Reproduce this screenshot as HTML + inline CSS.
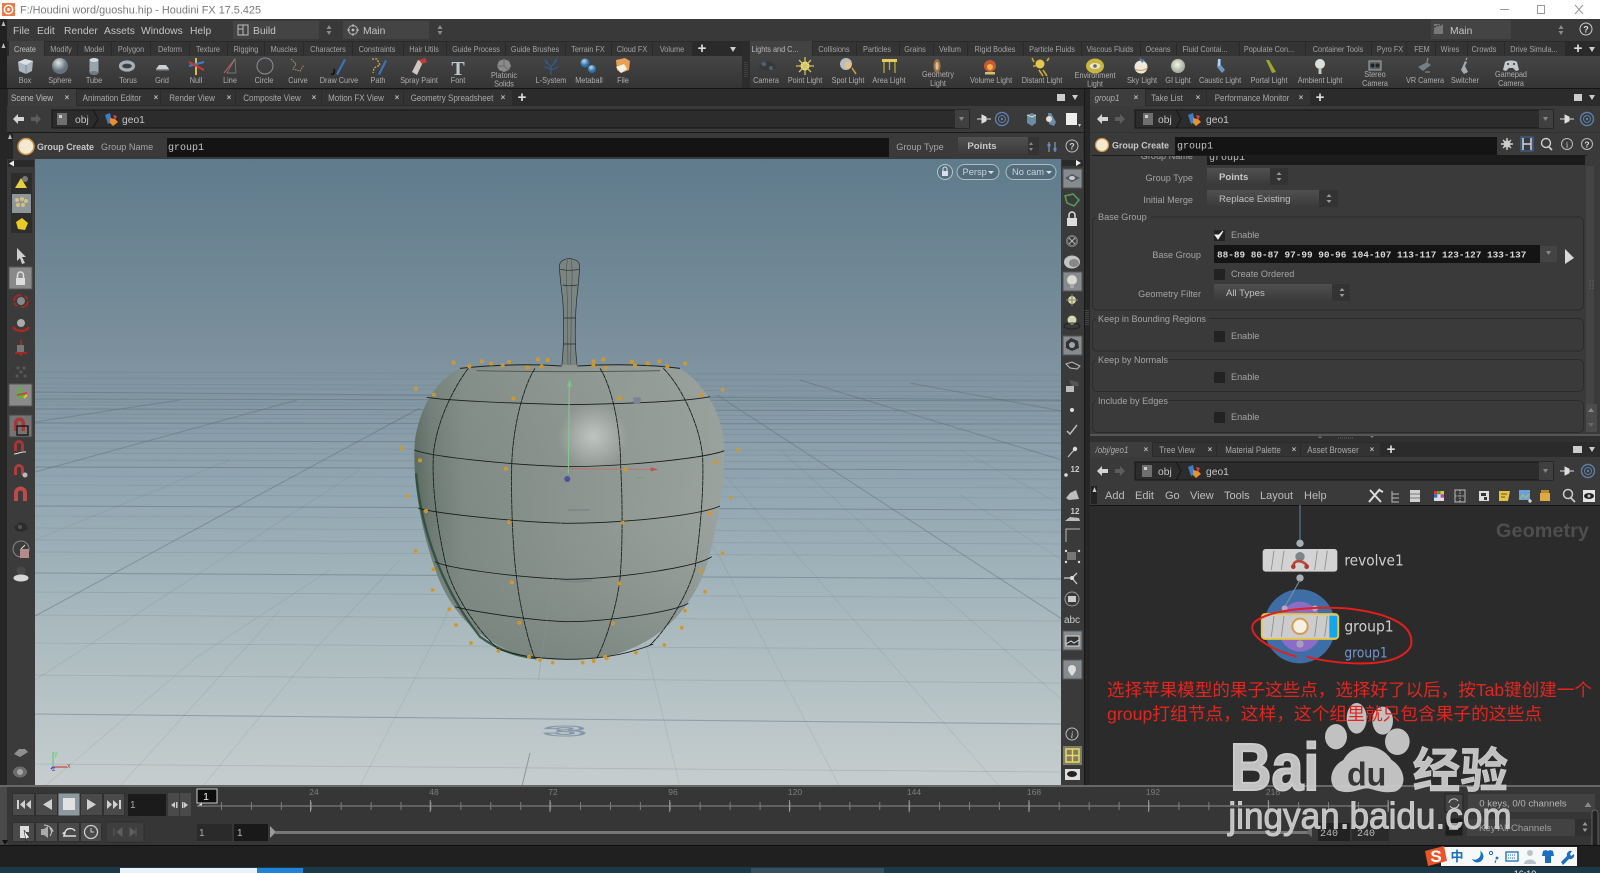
<!DOCTYPE html>
<html lang="zh"><head><meta charset="utf-8"><title>Houdini FX 17.5.425</title>
<style>
html,body{margin:0;padding:0;background:#333;width:1600px;height:873px;overflow:hidden}
svg{display:block;filter:blur(.35px)}
text{font-family:"Liberation Sans","Noto Sans CJK SC",sans-serif}
.mn{font-size:10.3px;fill:#c4c4c4}
.st,.sl,.pt{transform-box:fill-box;transform-origin:center;transform:scaleX(.89)}
.st{font-size:8.2px;fill:#a4a4a4;text-anchor:middle}
.sl{font-size:8.2px;fill:#aeaeae;text-anchor:middle}
.pt{font-size:9px;fill:#aaa;text-anchor:middle}
.x{font-size:8px;fill:#bbb;text-anchor:middle;font-weight:bold}
.plus{font-size:15px;fill:#ddd;text-anchor:middle;font-weight:bold}
.lb{font-size:9.6px;fill:#a4a4a4;transform-box:fill-box;transform-origin:left;transform:scaleX(.95)}
.lb.r{transform-origin:right}
.lb.m{transform-origin:center}
.r{text-anchor:end}
.m{text-anchor:middle}
.mono{font-family:"Liberation Mono",monospace}
.sc{stroke:#2c2c2c;fill:none}
.gc{transform-box:fill-box;transform-origin:left;transform:scaleX(.93)}
</style></head><body>
<svg width="1600" height="873" viewBox="0 0 1600 873" xmlns="http://www.w3.org/2000/svg">
<defs>
<linearGradient id="vp" x1="0" y1="0" x2="0" y2="1"><stop offset="0" stop-color="#5f7b8c"/><stop offset=".29" stop-color="#7a8f9b"/><stop offset=".54" stop-color="#93a8b3"/><stop offset=".86" stop-color="#b6c3c5"/><stop offset="1" stop-color="#c6cdce"/></linearGradient>
<linearGradient id="ap" x1="0" y1="0" x2="1" y2="0"><stop offset="0" stop-color="#56675e"/><stop offset=".05" stop-color="#6c7972"/><stop offset=".16" stop-color="#7f8a85"/><stop offset=".5" stop-color="#8b948f"/><stop offset="1" stop-color="#9ba39e"/></linearGradient>
<linearGradient id="apv" x1="0" y1="0" x2="0" y2="1"><stop offset="0" stop-color="#98a09b" stop-opacity=".25"/><stop offset=".5" stop-color="#8a938e" stop-opacity="0"/><stop offset="1" stop-color="#6a7772" stop-opacity=".45"/></linearGradient>
<radialGradient id="hl"><stop offset="0" stop-color="#cdd0cc" stop-opacity=".8"/><stop offset="1" stop-color="#cdd0cc" stop-opacity="0"/></radialGradient>
<radialGradient id="sph" cx=".4" cy=".3"><stop offset="0" stop-color="#dfe6ea"/><stop offset="1" stop-color="#66727c"/></radialGradient>
<radialGradient id="wsp" cx=".45" cy=".4"><stop offset="0" stop-color="#f4f4ea"/><stop offset="1" stop-color="#a9b0a0"/></radialGradient>
<radialGradient id="blu" cx=".4" cy=".3"><stop offset="0" stop-color="#b7dcf4"/><stop offset="1" stop-color="#2e6ea8"/></radialGradient>
<linearGradient id="shelf" x1="0" y1="0" x2="0" y2="1"><stop offset="0" stop-color="#454545"/><stop offset="1" stop-color="#343434"/></linearGradient>
<linearGradient id="dd" x1="0" y1="0" x2="0" y2="1"><stop offset="0" stop-color="#505050"/><stop offset="1" stop-color="#3a3a3a"/></linearGradient>
<clipPath id="vc"><rect x="35" y="159" width="1026" height="627"/></clipPath>
<clipPath id="fc"><rect x="1214" y="245" width="312" height="18"/></clipPath>
<clipPath id="pc"><rect x="1090" y="155" width="497" height="278"/></clipPath>
<clipPath id="tc"><rect x="1480" y="867" width="100" height="6"/></clipPath>
</defs>

<!-- base -->
<rect width="1600" height="873" fill="#323232"/>

<!-- title bar -->
<rect width="1600" height="19" fill="#fff"/>
<rect x="2" y="3" width="13" height="13" fill="#ea7d4a"/><circle cx="8.5" cy="9.5" r="4.2" fill="none" stroke="#fff" stroke-width="1.4"/><circle cx="8.5" cy="9.5" r="1.5" fill="#fff"/>
<text x="20" y="13.4" font-size="11" fill="#7a7a7a" textLength="241" lengthAdjust="spacingAndGlyphs">F:/Houdini word/guoshu.hip - Houdini FX 17.5.425</text>
<path d="M1500 9.5h9" stroke="#999"/><rect x="1537.5" y="5.5" width="7" height="8" fill="none" stroke="#999"/><path d="M1575 5l8 9M1583 5l-8 9" stroke="#999"/>

<!-- menu bar -->
<rect y="19" width="1600" height="22" fill="#393939"/>
<rect y="19" width="7" height="22" fill="#222"/><path d="M3.5 21l-2 5h4z" fill="#bbb"/>
<g>
<text class="mn" x="13" y="34">File</text><text class="mn" x="37" y="34">Edit</text><text class="mn" x="64" y="34">Render</text><text class="mn" x="104" y="34">Assets</text><text class="mn" x="141" y="34">Windows</text><text class="mn" x="190" y="34">Help</text>
</g>
<rect x="233" y="21" width="86" height="18" fill="#444"/><rect x="238" y="25" width="10" height="10" fill="none" stroke="#bbb"/><path d="M243 25v10M238 29h5" stroke="#bbb"/><text class="mn" x="253" y="34" font-size="10.5">Build</text>
<path d="M329 25l-2.5 4h5zM329 35l-2.5-4h5z" fill="#8a8a8a"/>
<rect x="343" y="21" width="86" height="18" fill="#444"/><circle cx="353" cy="30" r="4.5" fill="none" stroke="#bbb"/><circle cx="353" cy="30" r="1.4" fill="#bbb"/><path d="M353 24v3M353 33v3M347 30h3M356 30h3" stroke="#bbb"/><text class="mn" x="363" y="34">Main</text>
<path d="M440 25l-2.5 4h5zM440 35l-2.5-4h5z" fill="#8a8a8a"/>
<rect x="1431" y="20" width="80" height="19" fill="#444"/><rect x="1434" y="24" width="9" height="10" fill="#777"/><path d="M1434 27l9-3" stroke="#222" stroke-dasharray="2 1"/><text class="mn" x="1450" y="34">Main</text>
<path d="M1561 25l-2.5 4h5zM1561 35l-2.5-4h5z" fill="#8a8a8a"/>
<circle cx="1586" cy="29" r="6" fill="none" stroke="#ccc"/><text x="1586" y="32.5" font-size="9" fill="#ddd" class="m" font-weight="bold">?</text>

<!-- shelf tabs left -->
<rect y="41" width="748" height="15" fill="#2a2a2a"/>
<rect y="41" width="7" height="48" fill="#1f1f1f"/><path d="M3.5 43l-2 5h4z" fill="#bbb"/>
<rect x="9" y="41" width="35" height="16" fill="#424242"/>
<g fill="#343434"><rect x="45" y="42" width="32" height="14"/><rect x="78" y="42" width="33" height="14"/><rect x="112" y="42" width="38" height="14"/><rect x="151" y="42" width="38" height="14"/><rect x="190" y="42" width="37" height="14"/><rect x="228" y="42" width="36" height="14"/><rect x="265" y="42" width="38" height="14"/><rect x="304" y="42" width="48" height="14"/><rect x="353" y="42" width="50" height="14"/><rect x="404" y="42" width="42" height="14"/><rect x="447" y="42" width="58" height="14"/><rect x="506" y="42" width="59" height="14"/><rect x="566" y="42" width="45" height="14"/><rect x="612" y="42" width="40" height="14"/><rect x="653" y="42" width="39" height="14"/></g>
<text class="st" x="25" y="52" style="fill:#c0c0c0">Create</text><text class="st" x="61" y="52">Modify</text><text class="st" x="94" y="52">Model</text><text class="st" x="131" y="52">Polygon</text><text class="st" x="170" y="52">Deform</text><text class="st" x="208" y="52">Texture</text><text class="st" x="246" y="52">Rigging</text><text class="st" x="284" y="52">Muscles</text><text class="st" x="328" y="52">Characters</text><text class="st" x="377" y="52">Constraints</text><text class="st" x="424" y="52">Hair Utils</text><text class="st" x="476" y="52">Guide Process</text><text class="st" x="535" y="52">Guide Brushes</text><text class="st" x="588" y="52">Terrain FX</text><text class="st" x="632" y="52">Cloud FX</text><text class="st" x="672" y="52">Volume</text>
<text class="plus" x="702" y="53">+</text><path d="M730 47h6l-3 5z" fill="#ccc"/>
<rect x="7" y="56" width="735" height="32" fill="url(#shelf)"/>
<rect x="742" y="41" width="8" height="48" fill="#2c2c2c"/><path d="M745 62v16M747 62v16" stroke="#555" stroke-dasharray="1 1"/>

<!-- shelf labels left -->
<text class="sl" x="25" y="83">Box</text><text class="sl" x="60" y="83">Sphere</text><text class="sl" x="94" y="83">Tube</text><text class="sl" x="128" y="83">Torus</text><text class="sl" x="162" y="83">Grid</text><text class="sl" x="196" y="83">Null</text><text class="sl" x="230" y="83">Line</text><text class="sl" x="264" y="83">Circle</text><text class="sl" x="298" y="83">Curve</text><text class="sl" x="339" y="83">Draw Curve</text><text class="sl" x="378" y="83">Path</text><text class="sl" x="419" y="83">Spray Paint</text><text class="sl" x="458" y="83">Font</text><text class="sl" x="504" y="78">Platonic</text><text class="sl" x="504" y="86.5">Solids</text><text class="sl" x="551" y="83">L-System</text><text class="sl" x="589" y="83">Metaball</text><text class="sl" x="623" y="83">File</text>

<!-- shelf icons left -->
<path d="M18 62l7-3 8 2-1 10-6 3-7-3z" fill="#a9b6bf"/><path d="M18 62l8 3 7-4-8-2z" fill="#dbe2e6"/><path d="M26 65v9" stroke="#7c8a94"/>
<circle cx="60" cy="66" r="8" fill="url(#sph)"/>
<rect x="89.5" y="60" width="9" height="13" fill="#98a4ac"/><ellipse cx="94" cy="60" rx="4.5" ry="2" fill="#d2dadf"/><ellipse cx="94" cy="73" rx="4.5" ry="2" fill="#6f7c86"/>
<ellipse cx="127" cy="66" rx="6.5" ry="4" fill="none" stroke="#a3b0ba" stroke-width="3.2"/>
<path d="M156 69l3-4h7l3 4z" fill="#ccd0d2"/><rect x="156" y="69" width="13" height="1.5" fill="#888"/>
<path d="M196 58v17" stroke="#e8b83a" stroke-width="2"/><path d="M189 66l15-4" stroke="#3e7fcc" stroke-width="2"/><path d="M189 62l15 8" stroke="#c73a3a" stroke-width="2"/>
<path d="M224 73l11-14" stroke="#b35a5a" stroke-width="1.2"/><path d="M227 73l8-14 1 14z" fill="none" stroke="#888" stroke-width=".7"/>
<circle cx="265" cy="66" r="8" fill="none" stroke="#8a8f94"/>
<path d="M291 59l5 5-3 5 7 2 4-6" fill="none" stroke="#aa9a66" stroke-dasharray="1.5 1"/>
<path d="M331 74c3 1 4-2 3-5" fill="none" stroke="#111" stroke-width="1.6"/><path d="M336 74l8-15 2 1-8 15z" fill="#3e72b8"/>
<path d="M372 59h5l3 6-6 3-1 5" fill="none" stroke="#c9b040" stroke-dasharray="2 1.2" stroke-width="1.3"/><path d="M378 74l7-14 2 1-7 14z" fill="#3e72b8"/>
<path d="M412 72l6-12 5 2-6 13z" fill="#cfc6c4"/><path d="M419 60l6-2 2 4-5 2z" fill="#c43a3a"/>
<text x="458" y="75" font-size="20" font-weight="bold" fill="#bcc8cc" class="m" style="font-family:'Liberation Serif',serif">T</text>
<path d="M504 59l5 2 2 5-2 4-5 2-5-2-2-4 2-5z" fill="#8a8a8a"/><path d="M504 59v7l5 4M504 66l-7 0" stroke="#6a6a6a" fill="none"/>
<path d="M551 75v-8M551 67l-5-6M551 67l6-7M551 69l-7-2M551 70l7-3M547 64l-2-5M554 62l3-3" stroke="#2d5e96" fill="none"/>
<circle cx="585" cy="63" r="4.5" fill="url(#blu)"/><circle cx="592" cy="69" r="4" fill="url(#blu)"/>
<path d="M616 60l9-2 5 3-1 9-8 3-4-3z" fill="#e8a055"/><path d="M616 67l8-3 3 5-6 4z" fill="#f4f0e8"/>

<!-- shelf right -->
<rect x="750" y="41" width="850" height="15" fill="#2a2a2a"/>
<rect x="750" y="41" width="62" height="16" fill="#424242"/>
<g fill="#343434"><rect x="813" y="42" width="43" height="14"/><rect x="857" y="42" width="42" height="14"/><rect x="900" y="42" width="33" height="14"/><rect x="934" y="42" width="33" height="14"/><rect x="968" y="42" width="55" height="14"/><rect x="1024" y="42" width="57" height="14"/><rect x="1082" y="42" width="58" height="14"/><rect x="1141" y="42" width="35" height="14"/><rect x="1177" y="42" width="62" height="14"/><rect x="1240" y="42" width="65" height="14"/><rect x="1306" y="42" width="65" height="14"/><rect x="1372" y="42" width="34" height="14"/><rect x="1407" y="42" width="28" height="14"/><rect x="1436" y="42" width="31" height="14"/><rect x="1468" y="42" width="36" height="14"/><rect x="1505" y="42" width="60" height="14"/></g>
<text class="st" x="775" y="52" style="fill:#b8b8b8">Lights and C...</text><text class="st" x="834" y="52">Collisions</text><text class="st" x="877" y="52">Particles</text><text class="st" x="915" y="52">Grains</text><text class="st" x="950" y="52">Vellum</text><text class="st" x="995" y="52">Rigid Bodies</text><text class="st" x="1052" y="52">Particle Fluids</text><text class="st" x="1110" y="52">Viscous Fluids</text><text class="st" x="1158" y="52">Oceans</text><text class="st" x="1205" y="52">Fluid Contai...</text><text class="st" x="1269" y="52">Populate Con...</text><text class="st" x="1338" y="52">Container Tools</text><text class="st" x="1390" y="52">Pyro FX</text><text class="st" x="1422" y="52">FEM</text><text class="st" x="1450" y="52">Wires</text><text class="st" x="1484" y="52">Crowds</text><text class="st" x="1534" y="52">Drive Simula...</text>
<text class="plus" x="1578" y="53">+</text><path d="M1589 47h6l-3 5z" fill="#ccc"/>
<rect x="750" y="56" width="850" height="32" fill="url(#shelf)"/>
<text class="sl" x="766" y="83">Camera</text><text class="sl" x="805" y="83">Point Light</text><text class="sl" x="848" y="83">Spot Light</text><text class="sl" x="889" y="83">Area Light</text><text class="sl" x="938" y="77">Geometry</text><text class="sl" x="938" y="86">Light</text><text class="sl" x="991" y="83">Volume Light</text><text class="sl" x="1042" y="83">Distant Light</text><text class="sl" x="1095" y="78">Environment</text><text class="sl" x="1095" y="86.5">Light</text><text class="sl" x="1142" y="83">Sky Light</text><text class="sl" x="1178" y="83">GI Light</text><text class="sl" x="1220" y="83">Caustic Light</text><text class="sl" x="1269" y="83">Portal Light</text><text class="sl" x="1320" y="83">Ambient Light</text><text class="sl" x="1375" y="77">Stereo</text><text class="sl" x="1375" y="86">Camera</text><text class="sl" x="1425" y="83">VR Camera</text><text class="sl" x="1465" y="83">Switcher</text><text class="sl" x="1511" y="77">Gamepad</text><text class="sl" x="1511" y="86">Camera</text>

<!-- shelf icons right -->
<path d="M759 66l6-5 9 2 2 5-8 3-7-1z" fill="#33383c"/><circle cx="764" cy="64" r="2.4" fill="#555e66"/><circle cx="771" cy="68" r="2" fill="#555e66"/>
<circle cx="805" cy="66" r="4.5" fill="#e9e2a0"/><path d="M805 57v18M796 66h18M799 60l12 12M811 60l-12 12" stroke="#d6c25a" stroke-width="1.3"/>
<circle cx="846" cy="64" r="6" fill="#b8bdc0"/><circle cx="848" cy="65" r="3.5" fill="#e8c08a"/><path d="M852 68l4 6" stroke="#bda040" stroke-width="1.6"/>
<rect x="882" y="59" width="15" height="3" fill="#e0cc60"/><path d="M884 62v11M895 62v11M889.500 62v8" stroke="#b8a83a" stroke-width="1.3"/>
<ellipse cx="937" cy="66" rx="3.6" ry="7" fill="#9a7048"/><ellipse cx="937" cy="66" rx="1.6" ry="4" fill="#ddc090"/>
<circle cx="990" cy="66" r="6" fill="#c45a30"/><circle cx="990" cy="67" r="3" fill="#f0b050"/><rect x="985" y="72" width="10" height="2.500" fill="#c9c270"/>
<circle cx="1040" cy="64" r="4.500" fill="#e5c84a"/><path d="M1034 62l-2-4M1047 61l2-3M1043 70l4 6M1039 70l4 6M1036 66h-3" stroke="#c9a830" stroke-width="1.6"/>
<ellipse cx="1095" cy="66" rx="9" ry="7.500" fill="#c8b53e"/><ellipse cx="1095" cy="66" rx="5.500" ry="3" fill="#e8e6c8"/><circle cx="1095" cy="66" r="1.800" fill="#666"/>
<circle cx="1141" cy="67" r="6.500" fill="#ece8dc"/><path d="M1139 58l3 5 3-3z" fill="#5a7bb0"/><path d="M1135 69c3 2 9 2 12-1" stroke="#c99a40" fill="none"/>
<circle cx="1178" cy="66" r="7" fill="url(#wsp)"/>
<path d="M1218 59h3v6l4 5-3 3-5-6z" fill="#6f94c0"/><path d="M1218 59h2v7l-2 0z" fill="#b8cfe6"/>
<path d="M1266 60l3 0 7 12-4 1z" fill="#9aa82e"/>
<circle cx="1320" cy="64" r="5" fill="#dbe0dc"/><rect x="1318.500" y="68" width="3" height="6" fill="#c0c5c0"/>
<rect x="1369" y="61" width="12" height="9" fill="#5a5f62" stroke="#a5a9ab"/><circle cx="1372.500" cy="65.500" r="2" fill="#222"/><circle cx="1377.500" cy="65.500" r="2" fill="#222"/>
<path d="M1418 67l9-5 4 3-8 6z" fill="#777f84"/><path d="M1427 62l1-4M1425 72h5" stroke="#999"/>
<path d="M1461 70l4-9 2 1-2 4 3 6-4 2z" fill="#a6aaac"/><path d="M1466 60l1-2" stroke="#bbb"/>
<path d="M1503 70l2-8c2-2 10-2 12 0l2 8-3 1-3-3h-4l-3 3z" fill="#c5c8cb"/><circle cx="1508" cy="64" r="1" fill="#333"/><circle cx="1514" cy="64" r="1" fill="#333"/>

<!-- pane tabs, main -->
<rect y="88" width="1600" height="1" fill="#151515"/>
<rect y="89" width="1600" height="17" fill="#2b2b2b"/>
<rect x="0" y="89" width="7" height="698" fill="#262626"/>
<rect x="8" y="89" width="68" height="17" fill="#3d3d3d"/>
<g fill="#333"><rect x="77" y="90" width="83" height="15"/><rect x="161" y="90" width="74" height="15"/><rect x="236" y="90" width="85" height="15"/><rect x="322" y="90" width="81" height="15"/><rect x="404" y="90" width="108" height="15"/></g>
<text class="pt" x="32" y="101" style="fill:#bcbcbc">Scene View</text><text class="x" x="67" y="100">×</text>
<text class="pt" x="112" y="101">Animation Editor</text><text class="x" x="156" y="100">×</text>
<text class="pt" x="192" y="101">Render View</text><text class="x" x="229" y="100">×</text>
<text class="pt" x="272" y="101">Composite View</text><text class="x" x="314" y="100">×</text>
<text class="pt" x="356" y="101">Motion FX View</text><text class="x" x="397" y="100">×</text>
<text class="pt" x="452" y="101">Geometry Spreadsheet</text><text class="x" x="503" y="100">×</text>
<text class="plus" x="522" y="102">+</text>
<rect x="1057" y="94" width="8" height="7" fill="#ccc"/><path d="M1072 95h6l-3 5z" fill="#ccc"/>

<!-- left path bar -->
<rect x="7" y="106" width="1076" height="26" fill="#3a3a3a"/>
<rect x="52" y="110" width="917" height="18" fill="#2c2c2c" stroke="#151515"/>
<path d="M13 119l5-5v3h6v4h-6v3z" fill="#d4d4d4"/><path d="M41 119l-5-5v3h-5v4h5v3z" fill="#5c5c5c"/>
<rect x="57" y="113" width="10" height="12" fill="#6f6f6f"/><rect x="59" y="115" width="3" height="3" fill="#ccc"/>
<text x="75" y="123" class="mn">obj</text><path d="M93 110l5 9-5 9" fill="none" stroke="#161616"/>
<path d="M105 115l5-2 2 9-4 2z" fill="#3e7cc7"/><path d="M110 118l5 1 3 3-5 4-3-3z" fill="#e8902a"/><path d="M113 115l4 1-2 4z" fill="#d44"/>
<text x="122" y="123" class="mn">geo1</text>
<rect x="955" y="110" width="14" height="18" fill="#3f3f3f"/><path d="M959 117h5l-2.500 4z" fill="#888"/>
<path d="M977 119h5M982 115v8l4-2v-4zM986 119h5" stroke="#ddd" fill="#ddd"/>
<circle cx="1002" cy="119" r="6.500" fill="none" stroke="#5c7ea8" stroke-width="1.400"/><circle cx="1002" cy="119" r="3.500" fill="none" stroke="#5c7ea8"/><circle cx="1002" cy="119" r="1.200" fill="#5c7ea8"/>
<path d="M1027 115l5-2 4 2v8l-4 3-5-3z" fill="#6a8ca2"/><path d="M1027 115l5 2 4-2" stroke="#cfd9de" fill="none"/>
<path d="M1048 113l3 0 5 9-2 4-5-2z" fill="#6d8caa"/><circle cx="1049" cy="119" r="3" fill="#e4dfd0"/>
<rect x="1066" y="113" width="11" height="12" fill="#eee"/><path d="M1078 124h3l-1.500 3z" fill="#ccc"/>

<!-- op toolbar -->
<rect x="7" y="132" width="1076" height="1" fill="#1a1a1a"/>
<rect x="7" y="133" width="1076" height="26" fill="#3a3a3a"/><rect x="7" y="133" width="6" height="26" fill="#262626"/><path d="M10 134l-2 5h4z" fill="#bbb"/>
<circle cx="26" cy="146.500" r="8" fill="#f3ead4" stroke="#d09040" stroke-width="1.500"/>
<text x="37" y="150" font-size="9.600" font-weight="bold" fill="#c8c8c8" class="gc">Group Create</text>
<text x="101" y="150" class="lb">Group Name</text>
<rect x="167" y="138" width="722" height="19" fill="#141414"/>
<text x="168" y="150" font-size="10" class="mono" fill="#c4c4c4">group1</text>
<text x="920" y="150" class="lb m">Group Type</text>
<rect x="958" y="137" width="70" height="18" fill="url(#dd)"/><rect x="1028" y="137" width="11" height="18" fill="#333"/>
<text x="982" y="149" font-size="9.600" font-weight="bold" fill="#c8c8c8" class="m">Points</text>
<path d="M1031 142l-2 3h4zM1031 151l-2-3h4z" fill="#888"/>
<path d="M1049 142v10M1055 142v10" stroke="#aaa"/><rect x="1047.500" y="144" width="3" height="2.500" fill="#5a8fd0"/><rect x="1053.500" y="148" width="3" height="2.500" fill="#5a8fd0"/>
<circle cx="1072" cy="146" r="6" fill="none" stroke="#bbb"/><text x="1072" y="149.500" font-size="9" fill="#ccc" class="m" font-weight="bold">?</text>

<!-- viewport -->
<rect x="35" y="159" width="1026" height="627" fill="url(#vp)"/>
<g clip-path="url(#vc)">
<g stroke="#55666f" fill="none">
<g stroke-opacity=".2" stroke-width=".8"><path d="M35 372L1061 375M35 378L1061 381M35 384L1061 387M35 388L1061 392M35 396L1061 396M35 402L1061 405M35 405L1061 407M35 414L1061 416M35 418L1061 420M35 428L1061 430M35 433L1061 435M35 448L1061 451M35 453L1061 456M35 460L1061 462M35 476L1061 479M35 485L1061 488M35 495L1061 498M35 516L1061 520M35 528L1061 532M35 540L1061 544M35 552L1061 556M35 592L1061 598M35 615L1061 621M35 643L1061 650M35 675L1061 683M35 764L1061 772"/></g>
<g stroke-opacity=".45" stroke-width="1"><path d="M35 392L1061 400M35 399L1061 401M35 409L1061 411M35 423L1061 424M35 441L1061 443M35 467L1061 470M35 506L1061 510"/></g>
<g stroke-opacity=".4" stroke-width="1.100"><path d="M35 573L1061 579M35 714L1061 724"/></g>
<g stroke-opacity=".42" stroke-width="1"><path d="M35 616L420 408M35 472L297 400M35 422L180 400M1062 619L717 395M1062 460L800 380M1062 411L910 383"/></g>
<g stroke-opacity=".12" stroke-width=".9"><path d="M45 786L197 657L330 570M203 786L317 647L400 560M360 786L443 623L480 540M840 787L720 558L660 460M1000 787L817 578L720 470M1062 700L900 558L780 450M35 680L220 560L360 470M35 540L230 460M1062 560L960 495M1062 505L960 450M120 786L280 610M680 787L635 600"/></g>
</g>
<path d="M522 786L530 753" stroke="#8a979b" stroke-width="1"/>
<!-- floor number -->
<g transform="translate(565 736) scale(3.100 .62)"><text x="0" y="0" font-size="24" font-weight="bold" fill="none" stroke="#8797aa" stroke-width="1.600" class="m">3</text></g>
<!-- axes -->
<path d="M53 767v-15" stroke="#6cc77b" stroke-width="1.200"/><path d="M53 767h14" stroke="#cc4444" stroke-width="1.200"/><path d="M53 767l-2 2" stroke="#3a3acc" stroke-width="1.500"/>
<text x="54" y="756" font-size="7" fill="#6cc77b">y</text><text x="67" y="768" font-size="7" fill="#cc4444">x</text><text x="52" y="771" font-size="7" fill="#3a3acc">z</text>

<!-- apple -->
<g transform="translate(380 240) scale(.33333)">
<path d="M568 55C552 58 541 62 539 74C537 105 546 150 549 190C552 250 553 310 545 382L592 382C583 310 585 250 589 190C592 150 600 105 598 74C596 62 584 58 568 55Z" fill="#7a8481" stroke="#20282a" stroke-width="2"/>
<path d="M541 88Q568 94 597 88M548 135Q568 140 592 135M552 234H586M549 312H587" stroke="#20282a" stroke-width="2" fill="none"/>
<path d="M562 58C558 90 560 130 562 180L564 380M574 58C578 90 576 130 574 180L572 380" stroke="#2c3534" stroke-width="1.400" stroke-opacity=".8" fill="none"/>
<path d="M240 385C170 420 120 500 105 600C95 720 125 880 170 1000C210 1110 290 1200 420 1245C500 1265 620 1265 700 1245C840 1205 930 1110 975 990C1010 880 1035 740 1033 620C1025 510 970 430 900 385C800 371 350 371 240 385Z" fill="url(#ap)"/>
<path d="M240 385C170 420 120 500 105 600C95 720 125 880 170 1000C210 1110 290 1200 420 1245C500 1265 620 1265 700 1245C840 1205 930 1110 975 990C1010 880 1035 740 1033 620C1025 510 970 430 900 385C800 371 350 371 240 385Z" fill="url(#apv)"/>
<ellipse cx="640" cy="590" rx="105" ry="100" fill="url(#hl)"/>
<path d="M108 700C120 830 165 1020 300 1190C360 1235 420 1250 470 1255" fill="none" stroke="#2b4a39" stroke-width="7" stroke-opacity=".85"/>
<path d="M240 385Q400 368 545 378M592 378Q760 368 900 385" fill="none" stroke="#1a2220" stroke-width="3"/>
<path d="M290 392Q570 398 840 392" fill="none" stroke="#4a5450" stroke-width="2.500"/>
<g fill="none" stroke="#161d1b" stroke-width="2.600">
<path d="M140 472C200 482 400 490 560 494C720 492 930 484 990 470"/>
<path d="M103 630C160 652 400 675 560 680C720 680 970 656 1033 632"/>
<path d="M115 805C170 820 390 845 560 850C730 850 960 826 1020 798"/>
<path d="M165 965C200 985 410 1012 560 1018C715 1016 950 982 995 950"/>
<path d="M225 1100C260 1110 430 1140 560 1145C690 1145 880 1115 925 1090"/>
<path d="M350 1225C400 1245 460 1255 560 1258C650 1258 740 1245 820 1212"/>
<path d="M265 385C215 450 165 560 160 650C155 750 175 880 200 985C220 1060 290 1170 350 1222" stroke-dasharray="16 1.500"/>
<path d="M465 385C430 440 398 560 395 680C393 780 398 930 410 1015C418 1090 445 1210 465 1255" stroke-dasharray="16 1.500"/>
<path d="M660 385C695 440 722 560 722 680C728 780 728 930 720 1015C712 1090 680 1200 650 1255" stroke-dasharray="16 1.500"/>
<path d="M850 385C905 440 962 560 968 655C972 750 960 880 945 985C925 1060 860 1170 810 1215" stroke-dasharray="16 1.500"/>
</g>
<path d="M555 755L475 1320" stroke="#8a979b" stroke-width="3" stroke-opacity=".4"/>
<path d="M568 420L565 700" stroke="#86c892" stroke-width="3"/><path d="M569 418l-8 22h16z" fill="#78c48a"/>
<path d="M565 686L830 688" stroke="#b9706e" stroke-width="2.500"/><path d="M812 682l22 6-22 6z" fill="#c05050"/>
<path d="M768 713h22" stroke="#6da074" stroke-width="3"/>
<circle cx="562" cy="717" r="9" fill="#4f4fa5"/>
<rect x="761" y="473" width="20" height="18" fill="#7f8398" stroke="#6c7084"/>
<path d="M565 810h65M540 1020q45 10 95 0" stroke="#6d7681" stroke-width="5" stroke-opacity=".45" fill="none"/>
<g fill="#a89a52" stroke="#dd9a22" stroke-width="2.800">
<circle cx="221" cy="368" r="4.500"/><circle cx="268" cy="379" r="4.500"/><circle cx="306" cy="364" r="4.500"/><circle cx="334" cy="371" r="4.500"/><circle cx="368" cy="376" r="4.500"/><circle cx="387" cy="366" r="4.500"/><circle cx="443" cy="382" r="4.500"/><circle cx="474" cy="358" r="4.500"/><circle cx="485" cy="379" r="4.500"/><circle cx="503" cy="360" r="4.500"/><circle cx="641" cy="364" r="4.500"/><circle cx="640" cy="377" r="4.500"/><circle cx="670" cy="358" r="4.500"/><circle cx="678" cy="383" r="4.500"/><circle cx="755" cy="366" r="4.500"/><circle cx="765" cy="376" r="4.500"/><circle cx="803" cy="370" r="4.500"/><circle cx="838" cy="364" r="4.500"/><circle cx="862" cy="379" r="4.500"/><circle cx="915" cy="370" r="4.500"/><circle cx="108" cy="446" r="4.500"/><circle cx="162" cy="464" r="4.500"/><circle cx="400" cy="475" r="4.500"/><circle cx="718" cy="475" r="4.500"/><circle cx="965" cy="465" r="4.500"/><circle cx="1028" cy="449" r="4.500"/><circle cx="64" cy="625" r="4.500"/><circle cx="120" cy="661" r="4.500"/><circle cx="378" cy="686" r="4.500"/><circle cx="736" cy="688" r="4.500"/><circle cx="1008" cy="666" r="4.500"/><circle cx="1075" cy="630" r="4.500"/><circle cx="83" cy="768" r="4.500"/><circle cx="138" cy="813" r="4.500"/><circle cx="387" cy="846" r="4.500"/><circle cx="728" cy="848" r="4.500"/><circle cx="988" cy="819" r="4.500"/><circle cx="1052" cy="773" r="4.500"/><circle cx="107" cy="933" r="4.500"/><circle cx="160" cy="988" r="4.500"/><circle cx="395" cy="1027" r="4.500"/><circle cx="718" cy="1030" r="4.500"/><circle cx="963" cy="993" r="4.500"/><circle cx="1028" cy="939" r="4.500"/><circle cx="158" cy="1050" r="4.500"/><circle cx="208" cy="1108" r="4.500"/><circle cx="418" cy="1148" r="4.500"/><circle cx="698" cy="1150" r="4.500"/><circle cx="915" cy="1112" r="4.500"/><circle cx="975" cy="1055" r="4.500"/><circle cx="228" cy="1155" r="4.500"/><circle cx="905" cy="1163" r="4.500"/><circle cx="273" cy="1209" r="4.500"/><circle cx="355" cy="1233" r="4.500"/><circle cx="447" cy="1250" r="4.500"/><circle cx="853" cy="1215" r="4.500"/><circle cx="768" cy="1238" r="4.500"/><circle cx="480" cy="1260" r="4.500"/><circle cx="518" cy="1268" r="4.500"/><circle cx="608" cy="1268" r="4.500"/><circle cx="641" cy="1263" r="4.500"/><circle cx="675" cy="1250" r="4.500"/><circle cx="680" cy="1255" r="4.500"/>
</g>
</g>
<!-- viewport top right buttons -->
<circle cx="945" cy="172" r="7.500" fill="#55707f" stroke="#b8c4cc"/><rect x="942" y="171" width="6" height="5" fill="#dde"/><path d="M943 171v-2a2 2 0 0 1 4 0v2" fill="none" stroke="#dde"/>
<rect x="957" y="164.500" width="42" height="15" rx="7.500" fill="#536c7b" stroke="#aebcc4"/><text x="962.500" y="175" font-size="9.300" fill="#ccd4d9">Persp</text><path d="M988 171h6l-3 3z" fill="#dde"/>
<rect x="1006" y="164.500" width="50" height="15" rx="7.500" fill="#536c7b" stroke="#aebcc4"/><text x="1012" y="175" font-size="9.300" fill="#ccd4d9">No cam</text><path d="M1046 171h6l-3 3z" fill="#dde"/>
</g>

<!-- left toolbar -->
<rect x="7" y="159" width="28" height="627" fill="#3b3b3b"/>
<rect x="8" y="160" width="26" height="7" fill="#2a2a2a"/><path d="M9 163.500l5-3v6z" fill="#eee"/>
<rect x="11" y="173" width="21" height="60" fill="#2d2d2d"/>
<rect x="12" y="194" width="19" height="19" fill="#8f969a"/>
<path d="M15 188l6-10 6 10z" fill="#e7d03e"/><circle cx="25" cy="179" r="3" fill="#777"/>
<g fill="#d4c080"><circle cx="17" cy="200" r="2"/><circle cx="22" cy="199" r="2"/><circle cx="18" cy="205" r="2"/><circle cx="23" cy="205" r="2"/><circle cx="26" cy="201" r="2"/></g>
<path d="M16 222l6-4 6 5-3 7-7-1z" fill="#e6cc24"/>
<path d="M17 248l9 9-4 0 3 6-3 1-2-6-3 3z" fill="#cfcfcf"/>
<rect x="9" y="267" width="23" height="22" fill="#8a8a8a" stroke="#555"/><rect x="16" y="278" width="9" height="7" fill="#ddd"/><path d="M17.500 278v-3a3 3 0 0 1 6 0v3" fill="none" stroke="#ddd" stroke-width="1.500"/>
<circle cx="21" cy="301" r="4" fill="#888"/><path d="M14 301c0-4 3-6 7-6M28 301c0 4-3 6-7 6M14 303l3 3M28 299l-3-3" stroke="#a02a20" stroke-width="2" fill="none"/>
<circle cx="21" cy="323" r="4" fill="#aaa"/><path d="M13 327c2 3 6 4 8 4s6-1 8-4" stroke="#a82a20" stroke-width="2.500" fill="none"/>
<rect x="17" y="345" width="7" height="8" fill="#777"/><path d="M21 340v5M15 353h12M21 353v3" stroke="#a02a20" stroke-width="2"/>
<g fill="#5a5a5a"><circle cx="18" cy="368" r="1.500"/><circle cx="24" cy="368" r="1.500"/><circle cx="21" cy="372" r="1.500"/><circle cx="17" cy="376" r="1.500"/><circle cx="25" cy="376" r="1.500"/></g>
<rect x="9" y="384" width="23" height="22" fill="#8a8a8a" stroke="#555"/><path d="M18 391l3-6 2 9 5 1-8 4-4-3z" fill="#5db04a"/><path d="M17 395l10-2" stroke="#d33" stroke-width="1.500"/><path d="M24 398l3-3" stroke="#e8c030" stroke-width="2"/>
<rect x="9" y="415" width="23" height="22" fill="#747474" stroke="#444"/><path d="M14 431v-8a5.500 5.500 0 0 1 11 0v8h-3.500v-8a2 2 0 0 0-4 0v8z" fill="#a93535"/><rect x="17" y="426" width="11" height="9" fill="none" stroke="#1c1c1c" stroke-width="1.500"/>
<path d="M14 451v-6a5 5 0 0 1 10 0v6h-3v-6a2 2 0 0 0-4 0v6z" fill="#a93535"/><path d="M14 454c4 0 8-3 12-2" stroke="#ddd" fill="none"/>
<path d="M14 475v-6a5 5 0 0 1 10 0v6h-3v-6a2 2 0 0 0-4 0v6z" fill="#b03c3c"/><circle cx="25" cy="475" r="2.500" fill="#bbb"/>
<path d="M14 501v-8a6 6 0 0 1 13 0v8h-4v-8a2.500 2.500 0 0 0-5 0v8z" fill="#c04a4a"/>
<path d="M14 527l6-5 6 2 2 5-6 3-6-1z" fill="#2a2c2e"/><circle cx="20" cy="527" r="2" fill="#555"/>
<circle cx="21" cy="549" r="8" fill="none" stroke="#888"/><rect x="20" y="549" width="9" height="9" fill="#b38b8b"/><path d="M21 549l4-4" stroke="#ddd"/>
<circle cx="21" cy="571" r="4.500" fill="#4a4a4a"/><ellipse cx="21" cy="578" rx="7.500" ry="3.500" fill="#d8d8d8"/>
<path d="M14 754l5-5h6l3 3-8 5z" fill="#8f8f8f"/><ellipse cx="20" cy="772" rx="7" ry="5.500" fill="#6c6c6c"/><circle cx="20" cy="772" r="3" fill="#a5a5a5"/>

<!-- right viewport toolbar -->
<rect x="1061" y="159" width="23" height="627" fill="#3a3a3a"/>
<rect x="1062" y="160" width="21" height="6" fill="#2a2a2a"/><path d="M1081 163l-5-3v6z" fill="#eee"/>
<g fill="#858b8f" stroke="#555"><rect x="1063" y="169" width="19" height="19"/><rect x="1063" y="272" width="19" height="19"/><rect x="1063" y="336" width="19" height="19"/><rect x="1063" y="631" width="19" height="19"/><rect x="1063" y="660" width="19" height="19"/></g>
<path d="M1065 178l7-4 8 4-8 4z" fill="#556"/><ellipse cx="1072" cy="178" rx="3" ry="2" fill="#ccc"/>
<path d="M1065 196l8-2 6 6-5 6-7-3z" fill="none" stroke="#5a9a5a" stroke-width="1.500"/>
<rect x="1067" y="218" width="10" height="8" fill="#ddd"/><path d="M1069 218v-3a3 3 0 0 1 6 0v3" fill="none" stroke="#ddd" stroke-width="1.500"/>
<circle cx="1072" cy="241" r="5" fill="none" stroke="#777" stroke-width="2"/><path d="M1069 238l6 6M1075 238l-6 6" stroke="#bbb"/>
<ellipse cx="1072" cy="262" rx="8" ry="6.500" fill="#c4c4c4"/><ellipse cx="1074" cy="263" rx="5" ry="4" fill="#888"/>
<circle cx="1072" cy="280" r="5" fill="#d9d9d0"/><rect x="1070" y="284" width="4" height="4" fill="#aaa"/>
<circle cx="1072" cy="300" r="4" fill="#d6d89a"/><path d="M1072 294v12M1066 300h12" stroke="#888"/>
<circle cx="1072" cy="320" r="4.500" fill="#d6d6b0"/><ellipse cx="1072" cy="326" rx="8" ry="3" fill="none" stroke="#222"/>
<path d="M1066 342l5-4 7 3 1 7-7 3-6-3z" fill="#333"/><circle cx="1072" cy="345" r="3" fill="#9aa"/>
<path d="M1066 364l6-2 8 4-3 3-7-1z" fill="none" stroke="#bbb"/><ellipse cx="1072" cy="365" rx="3" ry="1.500" fill="#333"/>
<rect x="1066" y="386" width="8" height="6" fill="#bbb"/><path d="M1069 380l9 2 1 4-7 0z" fill="#555"/>
<circle cx="1072" cy="410" r="2" fill="#ddd"/>
<path d="M1067 431l3 3 7-9" stroke="#bbb" stroke-width="1.500" fill="none"/>
<path d="M1068 457l6-7" stroke="#ccc"/><circle cx="1075" cy="449" r="2.200" fill="#ddd"/>
<text x="1075" y="472" font-size="8" fill="#ccc" class="m" font-weight="bold">12</text><circle cx="1066" cy="475" r="1.800" fill="#ddd"/>
<path d="M1066 498l4-5 6-3 3 9-10 1z" fill="#bdbdbd"/>
<text x="1075" y="514" font-size="8" fill="#ccc" class="m" font-weight="bold">12</text><path d="M1065 521l5-4 9 1 1 3z" fill="#bbb"/>
<path d="M1066 542v-13h14" fill="none" stroke="#bbb"/>
<rect x="1067" y="552" width="9" height="8" fill="#777"/><g fill="#ddd"><circle cx="1066" cy="551" r="1.200"/><circle cx="1079" cy="551" r="1.200"/><circle cx="1066" cy="562" r="1.200"/><circle cx="1079" cy="562" r="1.200"/></g>
<path d="M1064 578h7M1072 578l5-5M1072 578l5 6" stroke="#ccc" stroke-width="1.300"/><circle cx="1072" cy="578" r="2" fill="#ddd"/>
<circle cx="1072" cy="599" r="7" fill="none" stroke="#999"/><rect x="1068" y="596" width="8" height="6" fill="#ccc"/>
<text x="1072" y="623" font-size="10" fill="#ccc" class="m">abc</text>
<rect x="1066" y="636" width="13" height="10" fill="#333" stroke="#ddd"/><path d="M1066 644l5-3 3 2 5-3" stroke="#ddd" fill="none"/>
<path d="M1072 665a4 4 0 0 1 4 4c0 3-4 7-4 7s-4-4-4-7a4 4 0 0 1 4-4z" fill="#ddd"/>
<circle cx="1072" cy="734" r="6" fill="none" stroke="#bbb"/><text x="1072" y="738" font-size="9" fill="#ddd" class="m" font-style="italic" style="font-family:'Liberation Serif',serif">i</text>
<rect x="1063" y="746" width="19" height="19" fill="#7f7d62"/><path d="M1066 749h13v13h-13zM1072.500 749v13M1066 755.500h13" fill="none" stroke="#e8d96a" stroke-width="1.500"/>
<rect x="1065" y="769" width="15" height="11" fill="#ddd"/><ellipse cx="1072" cy="774" rx="5" ry="3" fill="#222"/>

<!-- divider -->
<rect x="1084" y="89" width="6" height="698" fill="#262626"/>
<rect x="1084" y="89" width="1" height="698" fill="#171717"/>
<path d="M1086 310v15M1088 310v15" stroke="#666" stroke-dasharray="1 1"/>

<!-- right top pane -->
<rect x="1090" y="89" width="510" height="17" fill="#2b2b2b"/>
<rect x="1090" y="89" width="55" height="17" fill="#3d3d3d"/>
<g fill="#333"><rect x="1146" y="90" width="60" height="15"/><rect x="1207" y="90" width="103" height="15"/></g>
<text class="pt" x="1107" y="101" font-style="italic">group1</text><text class="x" x="1136" y="100">×</text>
<text class="pt" x="1167" y="101">Take List</text><text class="x" x="1198" y="100">×</text>
<text class="pt" x="1252" y="101">Performance Monitor</text><text class="x" x="1301" y="100">×</text>
<text class="plus" x="1320" y="102">+</text>
<rect x="1574" y="94" width="8" height="7" fill="#ccc"/><path d="M1589 95h6l-3 5z" fill="#ccc"/>
<rect x="1090" y="106" width="510" height="26" fill="#3a3a3a"/>
<rect x="1135" y="110" width="418" height="18" fill="#2c2c2c" stroke="#151515"/>
<path d="M1097 119l5-5v3h6v4h-6v3z" fill="#d4d4d4"/><path d="M1125 119l-5-5v3h-5v4h5v3z" fill="#5c5c5c"/>
<rect x="1143" y="113" width="10" height="12" fill="#6f6f6f"/><rect x="1145" y="115" width="3" height="3" fill="#ccc"/>
<text x="1158" y="123" class="mn">obj</text><path d="M1176 110l5 9-5 9" fill="none" stroke="#161616"/>
<path d="M1188 115l5-2 2 9-4 2z" fill="#3e7cc7"/><path d="M1193 118l5 1 3 3-5 4-3-3z" fill="#e8902a"/><path d="M1196 115l4 1-2 4z" fill="#d44"/>
<text x="1206" y="123" class="mn">geo1</text>
<rect x="1539" y="110" width="14" height="18" fill="#3f3f3f"/><path d="M1543 117h5l-2.500 4z" fill="#888"/>
<path d="M1560 119h5M1565 115v8l4-2v-4zM1569 119h5" stroke="#ddd" fill="#ddd"/>
<circle cx="1587" cy="119" r="6.500" fill="none" stroke="#5c7ea8" stroke-width="1.400"/><circle cx="1587" cy="119" r="3.500" fill="none" stroke="#5c7ea8"/><circle cx="1587" cy="119" r="1.200" fill="#5c7ea8"/>

<!-- parameters -->
<rect x="1090" y="133" width="510" height="302" fill="#3a3a3a"/>
<g clip-path="url(#pc)">
<text class="lb r" x="1193" y="159">Group Name</text>
<rect x="1207" y="150" width="378" height="15" fill="#1b1b1b"/>
<text x="1209" y="160" font-size="10" class="mono" fill="#bbb">group1</text>
</g>
<rect x="1090" y="133" width="510" height="22" fill="#3a3a3a"/><rect x="1092" y="155" width="495" height="1" fill="#1c1c1c"/>
<circle cx="1102" cy="145" r="6.500" fill="#f3ead4" stroke="#d09040" stroke-width="1.300"/>
<text x="1112" y="148.500" font-size="9.600" font-weight="bold" fill="#c8c8c8" class="gc">Group Create</text>
<rect x="1175" y="137" width="322" height="18" fill="#141414"/>
<text x="1177" y="148.500" font-size="10" class="mono" fill="#c4c4c4">group1</text>
<g stroke="#ccc" fill="#ccc"><circle cx="1507" cy="144" r="3.500" stroke="none"/><path d="M1507 138v12M1501 144h12M1503 140l8 8M1511 140l-8 8" stroke-width="1.500"/></g>
<path d="M1523 138v12M1531 138v12M1523 144h8" stroke="#c8d8e8" stroke-width="1.500"/><rect x="1521" y="137" width="12" height="14" fill="none" stroke="#3f6fa0"/>
<circle cx="1546" cy="143" r="4.500" fill="none" stroke="#ccc" stroke-width="1.400"/><path d="M1549 147l3 3" stroke="#ccc" stroke-width="1.800"/>
<circle cx="1567" cy="144" r="5.500" fill="none" stroke="#bbb"/><text x="1567" y="147.500" font-size="8.500" fill="#ddd" class="m" style="font-family:'Liberation Serif',serif">i</text>
<circle cx="1587" cy="144" r="5.500" fill="none" stroke="#bbb"/><text x="1587" y="147.500" font-size="8.500" fill="#ddd" class="m" font-weight="bold">?</text>

<text class="lb r" x="1193" y="181">Group Type</text>
<rect x="1207" y="168" width="63" height="17" fill="url(#dd)"/><rect x="1270" y="168" width="18" height="17" fill="#333"/>
<text x="1219" y="180" font-size="9.600" font-weight="bold" fill="#c8c8c8">Points</text><path d="M1279 172l-2.500 3h5zM1279 181l-2.500-3h5z" fill="#999"/>
<text class="lb r" x="1193" y="203">Initial Merge</text>
<rect x="1207" y="190" width="112" height="17" fill="url(#dd)"/><rect x="1319" y="190" width="19" height="17" fill="#333"/>
<text x="1219" y="202" font-size="9.600" fill="#c0c0c0">Replace Existing</text><path d="M1329 194l-2.500 3h5zM1329 203l-2.500-3h5z" fill="#999"/>

<rect class="sc" x="1092.500" y="217" width="491" height="93" rx="5"/>
<rect x="1096" y="212" width="55" height="10" fill="#3a3a3a"/><text x="1098" y="220" class="lb">Base Group</text>
<rect x="1214" y="230" width="11" height="11" fill="#222"/><path d="M1215 235l3 4 5-8-4 4z" fill="#eee" stroke="#eee"/>
<text x="1231" y="238" class="lb">Enable</text>
<text class="lb r" x="1201" y="258">Base Group</text>
<rect x="1214" y="245" width="326" height="18" fill="#141414"/><rect x="1540" y="246" width="17" height="16" fill="#444"/><path d="M1546 251h5l-2.500 4z" fill="#888"/>
<text x="1217" y="257.500" font-size="9.400" class="mono" font-weight="bold" fill="#d8d8d8" clip-path="url(#fc)">88-89 80-87 97-99 90-96 104-107 113-117 123-127 133-137 143-147</text>
<path d="M1565 249l9 9-9 6z" fill="#d8d8d8"/>
<rect x="1214" y="269" width="11" height="11" fill="#222"/><text x="1231" y="277" class="lb">Create Ordered</text>
<text class="lb r" x="1201" y="297">Geometry Filter</text>
<rect x="1214" y="284" width="118" height="17" fill="url(#dd)"/><rect x="1332" y="284" width="18" height="17" fill="#333"/>
<text x="1226" y="296" font-size="9.600" fill="#c0c0c0">All Types</text><path d="M1342 288l-2.500 3h5zM1342 297l-2.500-3h5z" fill="#999"/>

<rect class="sc" x="1092.500" y="318.500" width="491" height="32.500" rx="5"/>
<rect x="1096" y="313" width="113" height="10" fill="#3a3a3a"/><text x="1098" y="322" class="lb">Keep in Bounding Regions</text>
<rect x="1214" y="331" width="11" height="11" fill="#222"/><text x="1231" y="339" class="lb">Enable</text>
<rect class="sc" x="1092.500" y="359.500" width="491" height="32" rx="5"/>
<rect x="1096" y="354" width="72" height="10" fill="#3a3a3a"/><text x="1098" y="363" class="lb">Keep by Normals</text>
<rect x="1214" y="372" width="11" height="11" fill="#222"/><text x="1231" y="380" class="lb">Enable</text>
<rect class="sc" x="1092.500" y="400.500" width="491" height="32" rx="5"/>
<rect x="1096" y="395" width="72" height="10" fill="#3a3a3a"/><text x="1098" y="404" class="lb">Include by Edges</text>
<rect x="1214" y="412" width="11" height="11" fill="#222"/><text x="1231" y="420" class="lb">Enable</text>
<rect x="1586" y="166" width="8" height="266" fill="#444"/><rect x="1586" y="404" width="11" height="28" fill="#4b4b4b"/><path d="M1591 408l-3 4h6z" fill="#888"/><path d="M1591 427l-3-4h6z" fill="#666"/><path d="M1590 280v10M1593 280v10" stroke="#666" stroke-dasharray="1 1"/>
<rect x="1090" y="434" width="510" height="2" fill="#555"/><rect x="1090" y="436" width="510" height="6" fill="#303030"/>
<path d="M1318 438l2-2 2 2zM1370 436l2 2 2-2z" fill="#777"/><path d="M1338 438h16" stroke="#666" stroke-dasharray="1 1"/>

<!-- lower right pane tabs -->
<rect x="1090" y="442" width="510" height="15" fill="#2b2b2b"/>
<rect x="1090" y="442" width="62" height="15" fill="#3d3d3d"/>
<g fill="#333"><rect x="1153" y="443" width="63" height="13"/><rect x="1217" y="443" width="83" height="13"/><rect x="1301" y="443" width="79" height="13"/></g>
<text class="pt" x="1112" y="453" font-style="italic">/obj/geo1</text><text class="x" x="1146" y="452">×</text>
<text class="pt" x="1177" y="453">Tree View</text><text class="x" x="1210" y="452">×</text>
<text class="pt" x="1253" y="453">Material Palette</text><text class="x" x="1294" y="452">×</text>
<text class="pt" x="1333" y="453">Asset Browser</text><text class="x" x="1372" y="452">×</text>
<text class="plus" x="1391" y="454">+</text>
<rect x="1573" y="446" width="9" height="7" fill="#ccc"/><path d="M1589 447h6l-3 5z" fill="#ccc"/>
<rect x="1090" y="457" width="510" height="27" fill="#3a3a3a"/>
<rect x="1135" y="462" width="418" height="18" fill="#2c2c2c" stroke="#151515"/>
<path d="M1097 471l5-5v3h6v4h-6v3z" fill="#d4d4d4"/><path d="M1125 471l-5-5v3h-5v4h5v3z" fill="#5c5c5c"/>
<rect x="1142" y="465" width="10" height="12" fill="#6f6f6f"/><rect x="1144" y="467" width="3" height="3" fill="#ccc"/>
<text x="1158" y="475" class="mn">obj</text><path d="M1176 462l5 9-5 9" fill="none" stroke="#161616"/>
<path d="M1188 467l5-2 2 9-4 2z" fill="#3e7cc7"/><path d="M1193 470l5 1 3 3-5 4-3-3z" fill="#e8902a"/><path d="M1196 467l4 1-2 4z" fill="#d44"/>
<text x="1206" y="475" class="mn">geo1</text>
<rect x="1539" y="462" width="14" height="18" fill="#3f3f3f"/><path d="M1543 469h5l-2.500 4z" fill="#888"/>
<path d="M1560 471h5M1565 467v8l4-2v-4zM1569 471h5" stroke="#ddd" fill="#ddd"/>
<circle cx="1588" cy="471" r="6.500" fill="none" stroke="#5c7ea8" stroke-width="1.400"/><circle cx="1588" cy="471" r="3.500" fill="none" stroke="#5c7ea8"/><circle cx="1588" cy="471" r="1.200" fill="#5c7ea8"/>

<!-- network menu -->
<rect x="1090" y="484" width="510" height="21" fill="#3a3a3a"/><rect x="1090" y="505" width="510" height="1" fill="#141414"/>
<rect x="1091" y="486" width="6" height="18" fill="#222"/><path d="M1094.500 487l-2 5h4z" fill="#ccc"/>
<g font-size="11" fill="#bcbcbc"><text x="1105" y="499">Add</text><text x="1135" y="499">Edit</text><text x="1165" y="499">Go</text><text x="1190" y="499">View</text><text x="1224" y="499">Tools</text><text x="1260" y="499">Layout</text><text x="1304" y="499">Help</text></g>
<path d="M1370 490l11 12M1380 489l-11 13M1379 490l4 2" stroke="#dcdcdc" stroke-width="2" fill="none"/>
<path d="M1392 491v11h7M1392 494h7M1392 498h7" stroke="#bbb" fill="none"/>
<rect x="1410" y="490" width="10" height="12" fill="#d0d0d0"/><path d="M1410 494h10M1410 498h10" stroke="#777"/>
<g><rect x="1434" y="491" width="10" height="10" fill="#ddd"/><rect x="1434" y="491" width="3.300" height="3.300" fill="#d33"/><rect x="1437.300" y="491" width="3.300" height="3.300" fill="#3a3"/><rect x="1440.600" y="491" width="3.400" height="3.300" fill="#e8c030"/><rect x="1434" y="494.300" width="3.300" height="3.300" fill="#36c"/><rect x="1440.600" y="494.300" width="3.400" height="3.300" fill="#c3c"/></g>
<rect x="1455" y="490" width="10" height="12" fill="none" stroke="#bbb"/><path d="M1460 490v12M1455 496h10" stroke="#bbb" stroke-dasharray="1.500 1"/>
<rect x="1479" y="491" width="10" height="10" fill="#ddd"/><rect x="1481" y="493" width="5" height="3" fill="#333"/><rect x="1484" y="497" width="3" height="3" fill="#333"/>
<path d="M1499 491h11l-2 10h-9z" fill="#e6c43a"/><path d="M1501 494h6M1501 497h4" stroke="#555"/>
<rect x="1519" y="490" width="11" height="10" fill="#6ea0d8"/><path d="M1520 499l3-4 3 3 3-4" stroke="#9ccc66" fill="none"/><path d="M1528 501h4M1530 499v4" stroke="#fff"/>
<path d="M1540 493h10v8h-10z" fill="#e0a840"/><rect x="1541" y="490" width="8" height="3" fill="#b88a30"/>
<circle cx="1568" cy="494" r="4.500" fill="none" stroke="#ccc" stroke-width="1.500"/><path d="M1571 498l4 4" stroke="#ccc" stroke-width="1.800"/>
<rect x="1583" y="490" width="12" height="12" fill="#e4e4e4"/><ellipse cx="1589" cy="496" rx="5" ry="3" fill="#222"/><circle cx="1589" cy="496" r="1.500" fill="#ccc"/>

<!-- network editor -->
<rect x="1090" y="506" width="510" height="280" fill="#2b2b2b"/>
<text x="1496" y="537" font-size="19" font-weight="bold" fill="#4e4e4e" textLength="93" lengthAdjust="spacingAndGlyphs">Geometry</text>
<g transform="translate(1080 440) scale(.33333)">
<path d="M660 195V305" stroke="#537088" stroke-width="4"/>
<circle cx="660" cy="310" r="11" fill="#a8b0b5"/>
<rect x="548" y="327" width="224" height="68" rx="9" fill="#d3d3d3"/>
<path d="M582 332l-8 58M612 332l-8 58M742 332l-8 58M712 332l-8 58" stroke="#8c8c8c" stroke-width="2.500"/>
<circle cx="660" cy="350" r="14" fill="#7d8388"/><path d="M640 380c0-14 10-18 20-16 12 2 18 8 24 16" fill="none" stroke="#b8493a" stroke-width="8"/><circle cx="640" cy="380" r="7" fill="#a83a30"/><circle cx="680" cy="380" r="7" fill="#a83a30"/>
<text x="793" y="376" font-size="46" fill="#cfcfcf" style="font-family:'DejaVu Sans',sans-serif" textLength="178" lengthAdjust="spacingAndGlyphs">revolve1</text>
<circle cx="660" cy="414" r="11" fill="#a8b0b5"/>
<ellipse cx="659" cy="559" rx="107" ry="111" fill="#3f6ea6"/>
<ellipse cx="660" cy="560" rx="66" ry="75" fill="#8c6dc5"/>
<path d="M660 420L608 512" stroke="#7a93a5" stroke-width="3"/>
<circle cx="614" cy="505" r="9" fill="#c0a4c8"/><circle cx="705" cy="505" r="9" fill="#c0a4c8"/>
<rect x="545" y="522" width="230" height="75" rx="10" fill="#ccc" stroke="#e7c83a" stroke-width="5"/>
<path d="M748 527h18a6 6 0 0 1 6 6v54a6 6 0 0 1-6 6h-18z" fill="#16a5e8"/>
<path d="M582 528l-8 62M612 528l-8 62M742 528l-8 62M712 528l-8 62" stroke="#8c8c8c" stroke-width="2.500"/>
<circle cx="660" cy="559" r="23" fill="#f6f0e4" stroke="#d99a52" stroke-width="6"/>
<circle cx="660" cy="612" r="11" fill="#a8a0b5"/>
<text x="793" y="574" font-size="46" fill="#cfcfcf" style="font-family:'DejaVu Sans',sans-serif" textLength="148" lengthAdjust="spacingAndGlyphs">group1</text>
<text x="793" y="652" font-size="42" fill="#7496cc" style="font-family:'DejaVu Sans',sans-serif" textLength="130" lengthAdjust="spacingAndGlyphs">group1</text>
<path d="M680 650C760 672 950 692 992 620C1006 565 950 522 800 505C680 498 560 512 522 548C498 580 560 625 650 650" fill="none" stroke="#e21f1c" stroke-width="6"/>
</g>

<!-- timeline -->
<rect x="0" y="786" width="1600" height="59" fill="#363636"/>
<rect x="0" y="785" width="1600" height="2" fill="#676767"/>
<rect x="0" y="787" width="7" height="58" fill="#4a4a4a"/><path d="M2 840h6l-3 5z" fill="#111"/>
<g fill="#4a4a4a" stroke="#303030"><rect x="12.500" y="793.500" width="22" height="22"/><rect x="35.500" y="793.500" width="22" height="22"/><rect x="80.500" y="793.500" width="22" height="22"/><rect x="103.500" y="793.500" width="21" height="22"/></g>
<rect x="58.500" y="793.500" width="21" height="22" fill="#8d999e"/><rect x="63" y="798" width="12" height="12" fill="#dfe1e2"/>
<g fill="#d0d0d0"><path d="M17 800h2v9h-2zM25 800v9l-5-4.500zM31 800v9l-5-4.500zM52 799v11l-9-5.500zM87 799v11l9-5.500zM107 800v9l5-4.500zM113 800v9l5-4.500zM119 800h2v9h-2z"/></g>
<rect x="128" y="794" width="38" height="22" fill="#1b1b1b"/><text x="130" y="808" font-size="10" fill="#aaa">1</text>
<rect x="168" y="793" width="11" height="23" fill="#4a4a4a"/><rect x="180" y="793" width="11" height="23" fill="#4a4a4a"/>
<path d="M171 805l4-3v6zM176 802h1.500v6H176zM182 802h1.500v6H182zM188 805l-4-3v6z" fill="#ccc"/>
<path d="M197 806l5-3v3z" fill="#ddd"/>
<line x1="197" y1="806" x2="1389" y2="806" stroke="#7a7a7a" stroke-width="1.300"/>
<line x1="221" y1="806" x2="1389" y2="806" stroke="#7c7c7c" stroke-width="8" stroke-dasharray="1 28.920"/>
<line x1="310" y1="806" x2="1389" y2="806" stroke="#999" stroke-width="12" stroke-dasharray="1 118.730"/>
<rect x="197" y="789" width="20" height="14" fill="#0c0c0c" stroke="#ccc"/><text x="206" y="800" font-size="10.500" fill="#eee" class="m">1</text>
<g font-size="8.500" fill="#7e7e7e" class="m"><text x="314" y="795">24</text><text x="434" y="795">48</text><text x="553" y="795">72</text><text x="673" y="795">96</text><text x="795" y="795">120</text><text x="914" y="795">144</text><text x="1034" y="795">168</text><text x="1153" y="795">192</text><text x="1273" y="795">216</text></g>
<g fill="#4a4a4a" stroke="#303030"><rect x="12.500" y="822.500" width="22" height="19"/><rect x="35.500" y="822.500" width="22" height="19"/><rect x="58.500" y="822.500" width="21" height="19"/><rect x="80.500" y="822.500" width="21" height="19"/></g>
<rect x="106" y="822" width="38" height="20" fill="#3e3e3e" stroke="#2f2f2f"/>
<path d="M20 826h9v6l-3 0v6h-6z" fill="#ddd"/><path d="M24 830l6 8-3 0-1 3z" fill="#fff" stroke="#222" stroke-width=".6"/>
<path d="M41 829h3l4-3v12l-4-3h-3z" fill="#aaa"/><path d="M50 828q3 4 0 8M44 825a10 8 0 0 1 9 7" fill="none" stroke="#ccc"/>
<path d="M63 836h13M65 833c0-5 8-6 10-2" fill="none" stroke="#ddd" stroke-width="1.400"/><path d="M65 836l-3-3 4-2z" fill="#ddd"/>
<circle cx="91" cy="832" r="6.500" fill="none" stroke="#ccc" stroke-width="1.300"/><path d="M91 828v4h3" stroke="#ccc" fill="none"/>
<path d="M114 828v8M122 828v8l-5-4zM136 828v8M130 828v8l5-4z" fill="#5e5e5e" stroke="#5e5e5e"/>
<rect x="197" y="824" width="35" height="17" fill="#2a2a2a"/><text x="199" y="836" font-size="10" fill="#aaa">1</text>
<rect x="234" y="824" width="34" height="17" fill="#191919"/><text x="237" y="836" font-size="10" fill="#bbb">1</text>
<path d="M270 826l6 6-6 6z" fill="#9a9a9a"/><rect x="275" y="831" width="1037" height="3" fill="#777"/>
<path d="M1312 827l-6 5 6 5z" fill="#6a6a6a"/>
<rect x="1318" y="823" width="32" height="18" fill="#222"/><rect x="1352" y="823" width="37" height="18" fill="#2a2a2a"/>
<text x="1320" y="836" font-size="10" fill="#bbb" class="mono">240</text><text x="1357" y="836" font-size="10" fill="#bbb" class="mono">240</text>
<rect x="1445" y="794" width="18" height="18" fill="#444" stroke="#222"/><path d="M1449 803a5 5 0 0 1 9-2M1459 804a5 5 0 0 1-9 2" fill="none" stroke="#ccc"/>
<rect x="1468" y="794" width="127" height="18" fill="#424242"/>
<text x="1523" y="806.500" font-size="9.600" fill="#b5b5b5" class="m">0 keys, 0/0 channels</text>
<path d="M1588 802l-3.500 5h7z" fill="#888"/>
<rect x="1445" y="818" width="18" height="18" fill="#1d1d1d" stroke="#333"/><rect x="1449" y="823" width="9" height="7" fill="#999"/>
<rect x="1467" y="819" width="108" height="17" fill="#424242"/><rect x="1575" y="819" width="17" height="17" fill="#303030"/>
<text x="1479" y="831" font-size="9.600" fill="#a0a0a0">Key All Channels</text>
<path d="M1585 822l-2.500 3.500h5zM1585 832l-2.500-3.500h5z" fill="#999"/>
<rect x="1592" y="810" width="6" height="52" rx="3" fill="#222" stroke="#777" stroke-width=".7"/>

<!-- status bar -->
<rect x="0" y="845" width="1600" height="22" fill="#202020"/><rect x="0" y="845" width="1600" height="1" fill="#0f0f0f"/>
<rect x="0" y="867" width="1600" height="6" fill="#1b3a49"/>
<rect x="120" y="868" width="137" height="5" fill="#eaf2f8"/><rect x="257" y="868" width="46" height="5" fill="#1f84d6"/>
<rect x="751" y="868" width="133" height="5" fill="#36505f"/>
<text x="1525" y="877" font-size="9" fill="#eee" class="m" clip-path="url(#tc)">16:10</text>

<!-- baidu watermark -->
<g transform="translate(1080 440) scale(.33333)" fill="#cbcbcb" fill-opacity=".94">
<text x="450" y="1050" font-size="200" font-weight="bold" stroke="#cbcbcb" stroke-width="6" textLength="268" lengthAdjust="spacingAndGlyphs">Bai</text>
<ellipse cx="830" cy="835" rx="30" ry="46"/><ellipse cx="908" cy="842" rx="31" ry="42"/><ellipse cx="768" cy="890" rx="33" ry="38"/><ellipse cx="952" cy="905" rx="37" ry="40"/>
<path d="M790 960C820 905 900 905 935 960C975 985 985 1040 945 1055C900 1062 880 1045 860 1045C840 1045 810 1065 775 1052C740 1035 750 980 790 960Z"/>
<text x="860" y="1036" font-size="100" font-weight="bold" fill="#363636" fill-opacity="1" class="m" textLength="118" lengthAdjust="spacingAndGlyphs">du</text>
<text x="998" y="1043" font-size="143" font-weight="bold" stroke="#cbcbcb" stroke-width="2.500" style="font-family:'Noto Sans CJK SC',sans-serif">经验</text>
<text x="445" y="1165" font-size="112" stroke="#cbcbcb" stroke-width="3" textLength="850" lengthAdjust="spacingAndGlyphs">jingyan.baidu.com</text>
</g>

<!-- red annotation -->
<text x="1107" y="696" font-size="17.500" fill="#e3251f" textLength="485" lengthAdjust="spacingAndGlyphs">选择苹果模型的果子这些点，选择好了以后，按Tab键创建一个</text>
<text x="1107" y="720" font-size="17.500" fill="#e3251f" textLength="435" lengthAdjust="spacingAndGlyphs">group打组节点，这样，这个组里就只包含果子的这些点</text>

<!-- sogou IME -->
<rect x="1441" y="847" width="136" height="19" fill="#f7f8f9"/>
<path d="M1425 851l19-5 3 15-19 5z" fill="#e8552a"/>
<text x="1436" y="862" font-size="17" font-weight="bold" fill="#fff" class="m">S</text>
<text x="1457" y="861" font-size="13" font-weight="bold" fill="#1a6fc0" class="m" style="font-family:'Noto Sans CJK SC',sans-serif">中</text>
<path d="M1480 851a6 6 0 1 1-8 8 6 6 0 0 0 8-8z" fill="#1a6fc0"/>
<circle cx="1491" cy="853" r="1.600" fill="none" stroke="#1a6fc0"/><circle cx="1497" cy="858" r="1.400" fill="#1a6fc0"/><path d="M1496 860l-1 3" stroke="#1a6fc0"/>
<rect x="1506" y="852" width="12" height="9" fill="none" stroke="#1a6fc0" stroke-width="1.300"/><path d="M1508 855h8M1508 858h8" stroke="#1a6fc0" stroke-dasharray="1 1"/>
<circle cx="1530" cy="853" r="3" fill="#b8c4cc"/><path d="M1524 864c0-6 12-6 12 0z" fill="#b8c4cc"/>
<path d="M1543 851l3-1 2 1 2-1 3 1 1 5-3 0v7h-6v-7h-3z" fill="#1a6fc0"/>
<path d="M1561 862l6-6a4 4 0 0 1 5-5l-2 3 1 2 3-2a4 4 0 0 1-5 5l-6 6z" fill="#1a6fc0"/>
</svg>
</body></html>
